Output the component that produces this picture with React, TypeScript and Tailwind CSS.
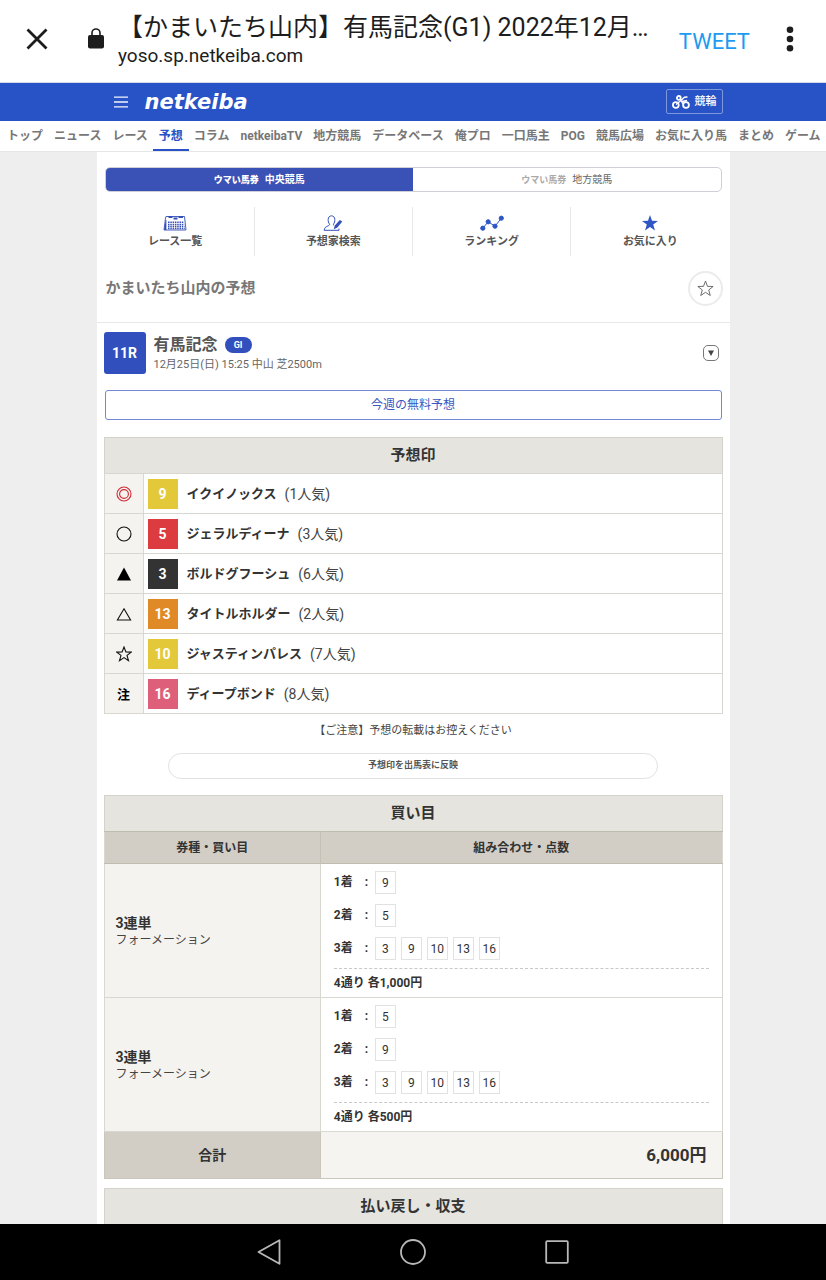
import React from "react";

const navItems = [
  "トップ", "ニュース", "レース", "予想", "コラム", "netkeibaTV", "地方競馬", "データベース",
  "俺プロ", "一口馬主", "POG", "競馬広場", "お気に入り馬", "まとめ", "ゲーム",
];

type Mark = "double" | "circle" | "black" | "white" | "star" | "note";

const picks: { mark: Mark; no: number; color: string; name: string; rank: string }[] = [
  { mark: "double", no: 9, color: "bg-[#e3c93a]", name: "イクイノックス", rank: "(1人気)" },
  { mark: "circle", no: 5, color: "bg-[#dc3b3f]", name: "ジェラルディーナ", rank: "(3人気)" },
  { mark: "black", no: 3, color: "bg-[#333333]", name: "ボルドグフーシュ", rank: "(6人気)" },
  { mark: "white", no: 13, color: "bg-[#df8a27]", name: "タイトルホルダー", rank: "(2人気)" },
  { mark: "star", no: 10, color: "bg-[#e3c93a]", name: "ジャスティンパレス", rank: "(7人気)" },
  { mark: "note", no: 16, color: "bg-[#de5f7a]", name: "ディープボンド", rank: "(8人気)" },
];

const bets = [
  { legs: [[9], [5], [3, 9, 10, 13, 16]], total: "4通り 各1,000円" },
  { legs: [[5], [9], [3, 9, 10, 13, 16]], total: "4通り 各500円" },
];

const starPoints = "8,1 9.9,6 15.2,6.1 11,9.4 12.5,14.6 8,11.6 3.5,14.6 5,9.4 0.8,6.1 6.1,6";

function MarkIcon({ mark }: { mark: Mark }) {
  if (mark === "note") {
    return <span className="text-[13px] leading-4 font-bold text-black">注</span>;
  }
  return (
    <svg viewBox="0 0 16 16" className="mx-auto block size-4" fill="none" stroke="#111" strokeWidth="1.1">
      {mark === "double" && (
        <g stroke="#cf2a35">
          <circle cx="8" cy="8" r="7" />
          <circle cx="8" cy="8" r="4.4" />
        </g>
      )}
      {mark === "circle" && <circle cx="8" cy="8" r="7" />}
      {mark === "black" && <path d="M8 1.5 15 14.5H1Z" fill="#000" stroke="none" />}
      {mark === "white" && <path d="M8 2.8 14.6 14H1.4Z" />}
      {mark === "star" && <polygon points={starPoints} />}
    </svg>
  );
}

function BrowserBar() {
  return (
    <header className="flex h-[83px] shrink-0 items-start border-b border-[#d5dae8] bg-white text-[#1d1d1d]">
      <button type="button" aria-label="閉じる" className="mt-7 ml-[26px]">
        <svg viewBox="0 0 22 22" className="block size-[22px]" stroke="#1d1d1d" strokeWidth="2.8">
          <path d="M1.5 1.5 20.5 20.5M20.5 1.5 1.5 20.5" />
        </svg>
      </button>
      <svg viewBox="0 0 16 21" className="mt-7 ml-10 h-[21px] w-4 shrink-0">
        <path d="M4 9V5a4 4 0 0 1 8 0v4" fill="none" stroke="#1d1d1d" strokeWidth="1.6" />
        <rect x="0" y="7" width="16" height="13.5" rx="2" fill="#1d1d1d" />
      </svg>
      <div className="mt-[13px] ml-[14px] min-w-0 flex-1">
        <h1 className="text-[25px] leading-[30px] whitespace-nowrap">【かまいたち山内】有馬記念(G1) 2022年12月…</h1>
        <p className="text-[19px] leading-[26px]">yoso.sp.netkeiba.com</p>
      </div>
      <button type="button" className="mt-[27px] mr-9 text-[22px] leading-[30px] text-[#1d9bf0]">TWEET</button>
      <button type="button" aria-label="メニュー" className="mt-[26px] mr-8">
        <svg viewBox="0 0 8 26" className="block h-[26px] w-2" fill="#1d1d1d">
          <circle cx="4" cy="3.8" r="3.3" />
          <circle cx="4" cy="13" r="3.3" />
          <circle cx="4" cy="22.2" r="3.3" />
        </svg>
      </button>
    </header>
  );
}

function SiteHeader() {
  return (
    <div className="bg-[#2753c6]">
      <div className="mx-auto flex h-[38px] max-w-[633px] items-center pr-[7px] pb-px pl-[17px] text-white">
        <button type="button" aria-label="サイトメニュー">
          <svg viewBox="0 0 14 12" className="block h-3 w-[14px]" stroke="#f4f6fd" strokeWidth="1.3">
            <path d="M0 1.2H14M0 6H14M0 10.8H14" />
          </svg>
        </button>
        <a href="#" className="ml-[17px] font-['DejaVu_Sans'] text-[21px] leading-6 font-bold italic">netkeiba</a>
        <a href="#" className="ml-auto flex h-[25px] items-center gap-[5px] rounded-xs border border-[#7d97dd] px-[5px] text-[11px] leading-4 font-medium">
          <svg viewBox="0 0 18 14" className="block h-[14px] w-[18px]" fill="none" stroke="#fff" strokeWidth="1.8">
            <circle cx="3.8" cy="10" r="2.9" />
            <circle cx="14" cy="10" r="2.9" />
            <circle cx="6.8" cy="2.9" r="1.9" />
            <path d="M4 9.5 8 6.3 12.5 2.2 15.5 2M8 4 11 9M10 6.5 15 5.5" strokeWidth="1.4" />
          </svg>
          競輪
        </a>
      </div>
    </div>
  );
}

function SiteNav() {
  return (
    <nav className="flex h-[31px] gap-[11px] overflow-hidden border-b border-[#e6e6e6] bg-white pl-[7px] text-[12px] font-bold text-[#777]">
      {navItems.map((item) =>
        item === "予想" ? (
          <a key={item} href="#" className="-mx-[6px] h-[30px] shrink-0 border-b-2 border-[#2753c6] px-[6px] leading-[30px] text-[#2753c6]">{item}</a>
        ) : (
          <a key={item} href="#" className="shrink-0 leading-[30px]">{item}</a>
        )
      )}
    </nav>
  );
}

function CalendarIcon() {
  return (
    <svg viewBox="0 0 24 16" className="block h-4 w-6" fill="none" stroke="#3450b8">
      <path d="M3 1.5H21.5L23 15H1L2.5 3Z" strokeWidth="0.9" />
      <path d="M2.6 5 1.2 15H3.4V5Z" fill="#3450b8" stroke="none" />
      <path d="M5.5 2H9.5M10.5 3.5H14.5M15.5 2H20" strokeWidth="2.2" />
      <path d="M5 7.2H21M5 9.4H21.3M5 11.6H21.6M5 13.6H21.8" strokeWidth="1.5" strokeDasharray="1.5 0.8" />
    </svg>
  );
}

function PersonIcon() {
  return (
    <svg viewBox="0 0 20 16" className="block h-4 w-5" fill="none" stroke="#3450b8" strokeWidth="1">
      <path d="M10.4 9.2C12.4 7 12.8 1 8.5.8 4.2 1 4.6 7 6.6 9.2 6.9 11.4 1.5 10.6 1.2 15.3H16V13.5M10.4 9.2 10.6 10.4" />
      <path d="M19.3 6.4 16.8 5 11.6 10.7 10.8 14.2 14.4 12.6Z" fill="#3450b8" stroke="none" />
    </svg>
  );
}

function GraphIcon() {
  return (
    <svg viewBox="0 0 24 16" className="block h-4 w-6" fill="#3056c6" stroke="#3056c6">
      <path d="M2.8 13.2 8.2 6.8 15 11.2 21.3 3.2" fill="none" strokeWidth="1" />
      <circle cx="2.8" cy="13.2" r="2.1" />
      <circle cx="8.2" cy="6.8" r="2.1" />
      <circle cx="15" cy="11.2" r="2.1" />
      <circle cx="21.3" cy="3.2" r="2.1" />
    </svg>
  );
}

function FilledStar() {
  return (
    <svg viewBox="0 0 16 16" className="block size-4" fill="#3056c6">
      <polygon points="8,0 10,5.8 16,6 11.2,9.6 13,15.6 8,12 3,15.6 4.8,9.6 0,6 6,5.8" />
    </svg>
  );
}

const shortcuts = [
  { label: "レース一覧", icon: <CalendarIcon /> },
  { label: "予想家検索", icon: <PersonIcon /> },
  { label: "ランキング", icon: <GraphIcon /> },
  { label: "お気に入り", icon: <FilledStar /> },
];

function SectionTitle({ children }: { children: React.ReactNode }) {
  return (
    <h2 className="flex h-9 items-center justify-center border border-b-0 border-[#d4d2ca] bg-[#e5e4df] pb-[2px] text-[15px] leading-5 font-bold text-[#333]">
      {children}
    </h2>
  );
}

function Picks() {
  return (
    <section className="mt-[17px]">
      <SectionTitle>予想印</SectionTitle>
      <table className="w-full border-collapse border border-[#d8d7d0]">
        <tbody>
          {picks.map((p) => (
            <tr key={p.no} className="h-10 border-b border-[#d8d7d0]">
              <td className="w-[39px] border-r border-[#d8d7d0] bg-[#f4f3ef] p-0 text-center">
                <MarkIcon mark={p.mark} />
              </td>
              <td className="p-0 pl-1 text-[#333]">
                <div className="flex items-center">
                  <span className={"flex size-[30px] items-center justify-center text-[14px] leading-5 font-bold text-white " + p.color}>{p.no}</span>
                  <span className="ml-[9px] text-[13px] leading-5 font-bold">{p.name}</span>
                  <span className="ml-2 text-[14px] leading-5 text-[#444]">{p.rank}</span>
                </div>
              </td>
            </tr>
          ))}
        </tbody>
      </table>
    </section>
  );
}

function Bets() {
  return (
    <section className="mt-4">
      <SectionTitle>買い目</SectionTitle>
      <table className="w-full border-collapse border border-[#d8d7d0] text-[#333]">
        <thead>
          <tr className="h-8 border-y border-[#bfbcb0] bg-[#d2cec6] text-[12px] leading-5">
            <th className="w-[35%] border-r border-[#c4c0b6] p-0">券種・買い目</th>
            <th className="p-0">組み合わせ・点数</th>
          </tr>
        </thead>
        <tbody>
          {bets.map((bet) => (
            <tr key={bet.total} className="border-b border-[#d8d7d0]">
              <td className="border-r border-[#d8d7d0] bg-[#f4f3ef] p-0 pl-[11px]">
                <p className="text-[14px] leading-[18px] font-bold">3連単</p>
                <p className="text-[12px] leading-4 text-[#444]">フォーメーション</p>
              </td>
              <td className="px-[13px] pt-[7px] pb-1">
                <div className="flex flex-col gap-[10px]">
                  {bet.legs.map((leg, i) => (
                    <div key={i} className="flex text-[12px]">
                      <span className="w-[27px] leading-[23px] font-bold">{i + 1}着</span>
                      <span className="w-[14px] pl-1 leading-[23px] font-bold">:</span>
                      <span className="flex gap-[5px]">
                        {leg.map((n) => (
                          <span key={n} className="h-[23px] w-[21px] border border-[#e2e2e2] text-center leading-[23px]">{n}</span>
                        ))}
                      </span>
                    </div>
                  ))}
                </div>
                <p className="mt-2 border-t border-dashed border-[#c8c8c8] pt-1 text-[12px] leading-5 font-bold">{bet.total}</p>
              </td>
            </tr>
          ))}
        </tbody>
        <tfoot>
          <tr className="h-[47px] border border-[#cac6ba]">
            <th className="border-r border-[#cac6ba] bg-[#d2cec6] p-0 text-[14px] leading-5">合計</th>
            <td className="bg-[#f5f4f0] p-0 pr-[15px] text-right text-[17px] leading-6 font-bold">6,000円</td>
          </tr>
        </tfoot>
      </table>
    </section>
  );
}

function SystemBar() {
  return (
    <footer className="flex h-14 shrink-0 items-center justify-center gap-[120px] bg-black">
      <button type="button" aria-label="戻る">
        <svg viewBox="0 0 24 26" className="block h-[26px] w-6" fill="none" stroke="#b8b8b8" strokeWidth="1.8" strokeLinejoin="round">
          <path d="M1.5 13 22.5 1.2V24.8Z" />
        </svg>
      </button>
      <button type="button" aria-label="ホーム">
        <svg viewBox="0 0 26 26" className="-mx-px block size-[26px]" fill="none" stroke="#b8b8b8" strokeWidth="1.8">
          <circle cx="13" cy="13" r="12" />
        </svg>
      </button>
      <button type="button" aria-label="アプリ一覧">
        <svg viewBox="0 0 24 24" className="block size-6" fill="none" stroke="#b8b8b8" strokeWidth="1.8">
          <rect x="1.2" y="1.2" width="21.6" height="21.6" rx="1" />
        </svg>
      </button>
    </footer>
  );
}

export default function App() {
  return (
    <div className="flex h-screen flex-col font-[Roboto,'Noto_Sans_CJK_JP',sans-serif]" lang="ja">
      <BrowserBar />
      <div className="min-h-0 flex-1 overflow-y-auto bg-[#eeeeee] [scrollbar-width:none]">
        <SiteHeader />
        <SiteNav />
        <main className="mx-auto max-w-[633px] bg-white pt-[15px]">
          <div className="mx-2 flex h-[25px] overflow-hidden rounded-[5px] border border-[#cfcfd8]">
            <a href="#" className="flex flex-1 items-center justify-center gap-[6px] bg-[#3a51b5] text-white">
              <span className="text-[9px] leading-4 font-black">ウマい馬券</span>
              <span className="text-[10px] leading-4 font-bold">中央競馬</span>
            </a>
            <a href="#" className="flex flex-1 items-center justify-center gap-[6px] text-[#666]">
              <span className="text-[9px] leading-4 font-bold text-[#aaa]">ウマい馬券</span>
              <span className="text-[10px] leading-4">地方競馬</span>
            </a>
          </div>

          <div className="mt-[15px] grid h-[49px] grid-cols-4 divide-x divide-[#e8e8e8]">
            {shortcuts.map((s) => (
              <a key={s.label} href="#" className="flex flex-col items-center pt-2 text-[11px] leading-4 font-bold text-[#555]">
                {s.icon}
                <span className="mt-[3px]">{s.label}</span>
              </a>
            ))}
          </div>

          <div className="flex h-[67px] items-center justify-between border-b border-[#e8e8e8] pr-[7px] pb-[2px] pl-[9px]">
            <h1 className="text-[15px] leading-5 font-bold text-[#777]">かまいたち山内の予想</h1>
            <button type="button" aria-label="お気に入りに追加" className="flex size-[35px] items-center justify-center rounded-full border-2 border-[#ebebeb]">
              <svg viewBox="0 0 16 16" className="block size-[17px]" fill="none" stroke="#666" strokeWidth="0.9">
                <polygon points={starPoints} />
              </svg>
            </button>
          </div>

          <div className="px-[7px]">
            <div className="flex items-center pt-[9px]">
              <span className="flex size-[42px] items-center justify-center rounded-[3px] bg-[#3150bd] text-[14px] leading-5 font-bold text-white">11R</span>
              <div className="ml-2">
                <div className="flex items-center gap-[7px]">
                  <h2 className="text-[16px] leading-6 font-bold text-[#555]">有馬記念</h2>
                  <span className="flex h-4 w-[27px] items-center justify-center rounded-full bg-[#3150bd] text-[9px] leading-4 font-bold text-white">GI</span>
                </div>
                <p className="text-[11px] leading-4 text-[#666]">12月25日(日) 15:25 中山 芝2500m</p>
              </div>
              <button type="button" aria-label="レース詳細を開く" className="mr-1 ml-auto flex size-4 items-center justify-center rounded-[5px] border border-[#777]">
                <svg viewBox="0 0 6 6" className="block size-[6px]" fill="#444"><path d="M0 .5H6L3 6Z" /></svg>
              </button>
            </div>

            <div className="px-px pt-4">
              <button type="button" className="block h-[30px] w-full rounded-[3px] border border-[#7288d3] text-[12px] leading-5 text-[#3a56c0]">
                今週の無料予想
              </button>
            </div>

            <Picks />

            <p className="mt-2 text-center text-[11px] leading-[18px] text-[#444]">【ご注意】予想の転載はお控えください</p>
            <button type="button" className="mx-auto mt-[13px] block h-[26px] w-full max-w-[490px] rounded-full border border-[#e2e2e2] pb-[2px] text-[9px] leading-4 font-bold text-[#555]">
              予想印を出馬表に反映
            </button>

            <Bets />

            <section className="mt-[9px]">
              <SectionTitle>払い戻し・収支</SectionTitle>
            </section>
          </div>
        </main>
      </div>
      <SystemBar />
    </div>
  );
}
